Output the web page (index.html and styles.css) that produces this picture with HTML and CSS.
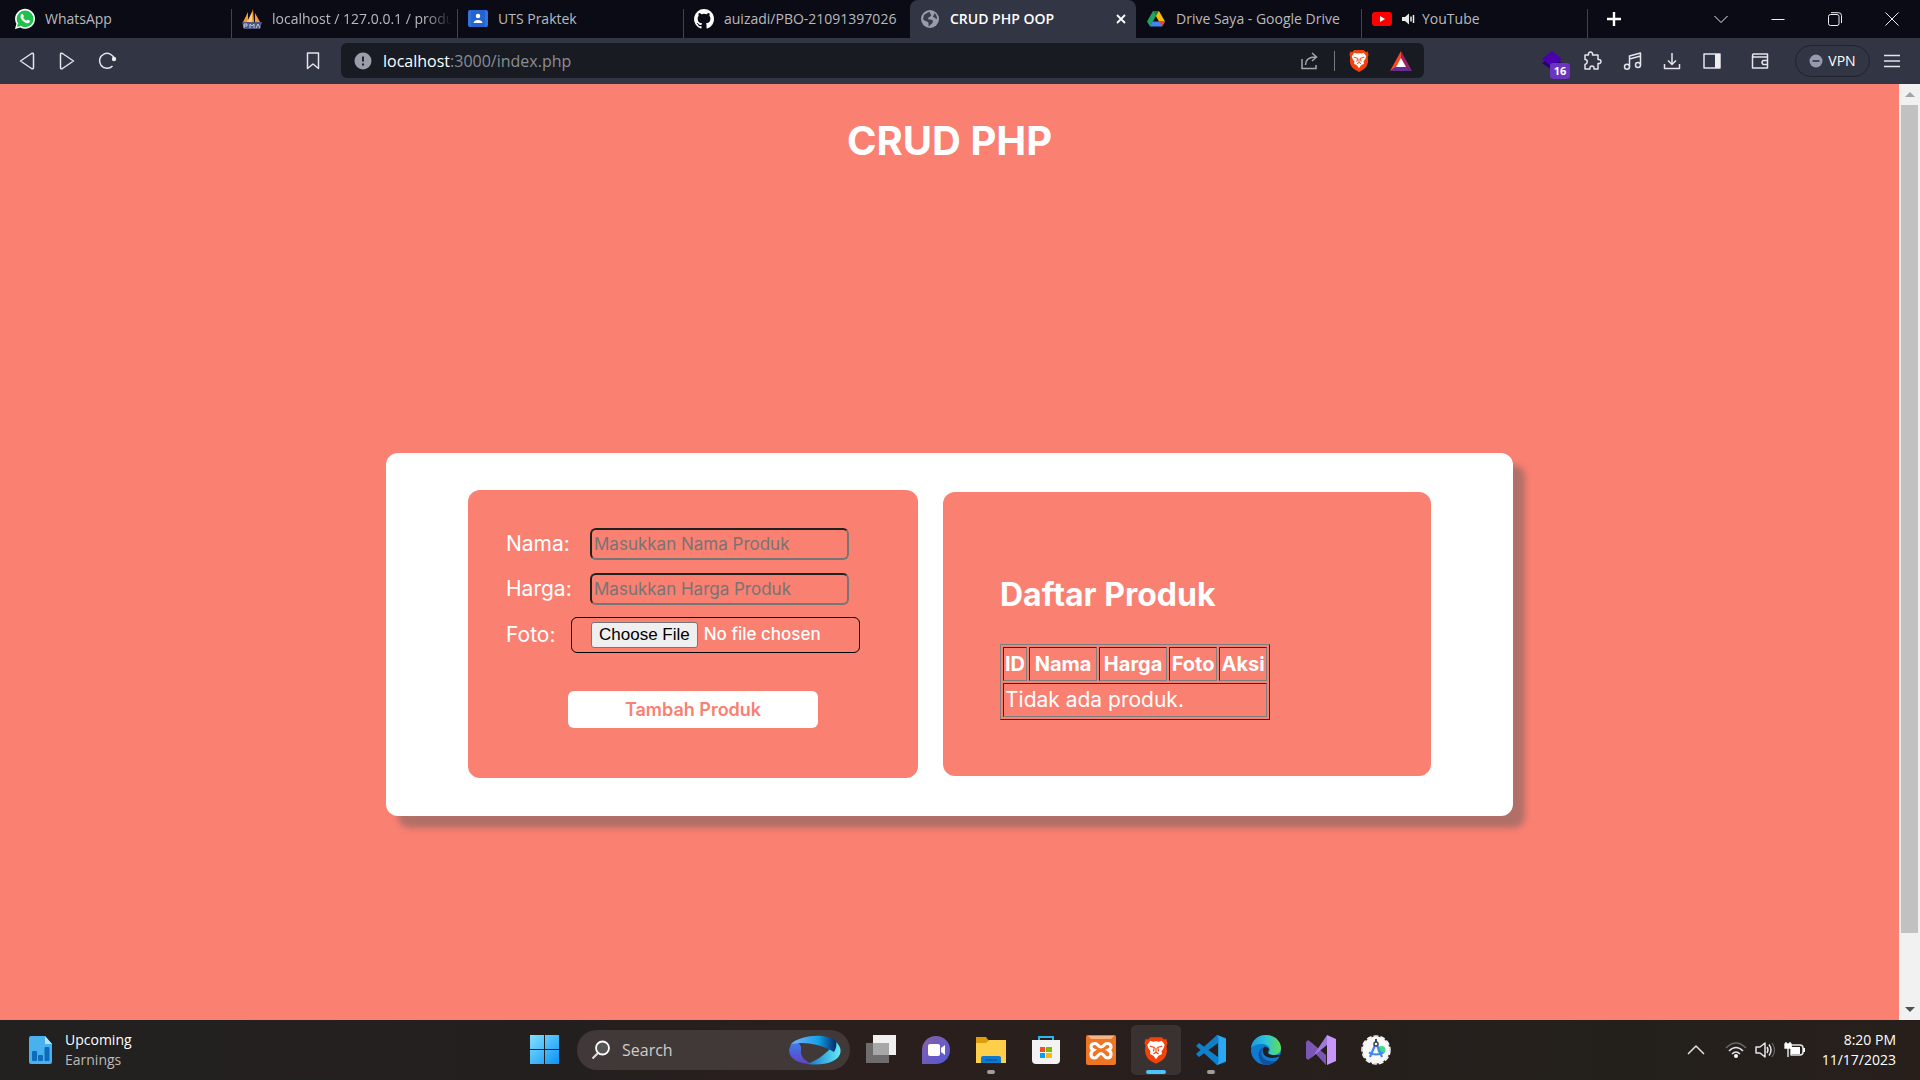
FILE: index.html
```html
<!DOCTYPE html>
<html lang="id">
<head>
<meta charset="utf-8">
<title>CRUD PHP OOP</title>
<meta name="viewport" content="width=device-width, initial-scale=1">
<link rel="stylesheet" href="styles.css">
</head>
<body>
<header class="browser">
  <nav class="tabs" aria-label="Tabs">
    <a class="tab tab-first" href="#">
      <svg class="i20" viewBox="0 0 20 20"><path d="M0 20 1.4 14.8A10 10 0 1 1 5.3 18.6Z" fill="#fff"/><circle cx="10.1" cy="9.9" r="8.4" fill="#1fc04b"/><path d="M2 18l1-4 3 3z" fill="#1fc04b"/><path d="M6.6 5.2c.8-.7 1.3-.3 1.5.2l.7 1.6c.1.5-.6 1.1-.6 1.4.7 1.500 1.900 2.600 3.400 3.200.4 0 .9-1 1.300-.9l1.800.9c.6.400.1 1.700-.6 2.200-1.100.8-3 .3-4.900-.9C7.100 11.500 5.600 9.400 5.500 7.700c0-1 .5-2 1.100-2.500z" fill="#fff"/></svg>
      <span class="tab-title">WhatsApp</span>
    </a>
    <a class="tab" href="#">
      <svg class="i20" viewBox="0 0 20 20"><path d="M1 13 6 3v10zM7 13 11 0l1 13zM13 13V4l5 9z" fill="#f79a2b"/><path d="M5 13 10 3v10z" fill="#ffc98a"/><path d="M0 13h20l-2 7H2z" fill="#4d5680"/><path d="M2 19v-4h3v2H2M8 19v-4l2 2 2-2v4M14 19l2-4 2 4" fill="none" stroke="#c3c7dd" stroke-width="1"/></svg>
      <span class="tab-title fade">localhost / 127.0.0.1 / produk</span>
    </a>
    <a class="tab" href="#">
      <svg class="i20" viewBox="0 0 20 20"><rect y="1" width="20" height="17" rx="2" fill="#2f74e0"/><rect x="3" y="1" width="14" height="17" fill="#2563d0"/><circle cx="10" cy="7" r="2.200" fill="#fff"/><path d="M5.500 14c0-4 9-4 9 0z" fill="#fff"/></svg>
      <span class="tab-title">UTS Praktek</span>
    </a>
    <a class="tab no-line" href="#">
      <svg class="i20" viewBox="0 0 16 16"><path fill="#fff" d="M8 0a8 8 0 0 0-2.530 15.590c.4.070.550-.170.550-.380v-1.490c-2.010.370-2.530-.490-2.690-.940-.090-.230-.480-.940-.820-1.130-.280-.150-.680-.520-.010-.530.630-.010 1.080.580 1.230.820.720 1.210 1.870.870 2.330.660.070-.520.280-.870.510-1.070-1.780-.200-3.640-.890-3.640-3.950 0-.870.310-1.590.820-2.150-.080-.200-.360-1.020.080-2.120 0 0 .670-.210 2.200.820a7.400 7.400 0 0 1 4 0c1.530-1.040 2.200-.820 2.200-.820.440 1.100.160 1.920.080 2.120.510.560.820 1.270.820 2.150 0 3.070-1.870 3.750-3.650 3.950.290.250.540.730.540 1.480v2.200c0 .210.150.460.550.380A8 8 0 0 0 8 0z"/></svg>
      <span class="tab-title">auizadi/PBO-21091397026</span>
    </a>
    <a class="tab active" href="#">
      <svg class="i20" viewBox="0 0 20 20"><circle cx="10" cy="10" r="9" fill="#9a9da8"/><path d="M4 6c2-1 3-3 6-3-1 2 2 2 1 4-1 1-3 1-3 3 2 1 4 0 5 2 0 3-3 3-4 6-1-2 0-4-1-5S4 12 3 10zM14 4c2 1 3 3 3 6-2 0-2-2-4-2 0-2 2-2 1-4z" fill="#3a3d4b"/></svg>
      <span class="tab-title">CRUD PHP OOP</span>
      <svg class="tab-x" viewBox="0 0 10 10"><path d="M1 1l8 8M9 1 1 9" stroke="#fff" stroke-width="1.800"/></svg>
    </a>
    <a class="tab" href="#">
      <svg class="i20" viewBox="0 0 20 20"><path d="M7 2 1 12.500 4 17.500 10 7z" fill="#1fa463"/><path d="M7 2h6l6 10.500h-6z" fill="#fbbc04"/><path d="M6.500 12.500H19l-3 5H4z" fill="#4285f4"/><path d="M13 12.500h6l-3 5z" fill="#ea4335"/><path d="M7 2h6l-3 5z" fill="#188038"/></svg>
      <span class="tab-title">Drive Saya - Google Drive</span>
    </a>
    <a class="tab" href="#">
      <svg class="i20" viewBox="0 0 20 20"><rect y="3" width="20" height="14" rx="3" fill="#f00"/><path d="M8 7v6l5-3z" fill="#fff"/></svg>
      <svg class="audio" viewBox="0 0 14 12"><path d="M0 4h3l4-3.500v11L3 8H0z" fill="#e8e8ea"/><path d="M9 3.500v5M11.500 2v8" stroke="#e8e8ea" stroke-width="1.500"/></svg>
      <span class="tab-title">YouTube</span>
    </a>
    <button class="new-tab" aria-label="New tab"><svg class="i16" viewBox="0 0 16 16"><path d="M8 1v14M1 8h14" stroke="#fff" stroke-width="2.400"/></svg></button>
    <div class="window-buttons">
      <button aria-label="Search tabs"><svg class="i14" viewBox="0 0 14 14"><path d="M.5 4 7 10.500 13.500 4" class="thin"/></svg></button>
      <button aria-label="Minimize"><svg class="i14" viewBox="0 0 14 14"><path d="M.5 7.500h13" class="thin"/></svg></button>
      <button aria-label="Restore"><svg class="i14" viewBox="0 0 14 14"><rect x=".5" y="2.500" width="10.500" height="11" rx="2" class="thin"/><path d="M3 .7h7.500a3 3 0 0 1 3 3V11" class="thin"/></svg></button>
      <button aria-label="Close"><svg class="i14" viewBox="0 0 14 14"><path d="M.5.5l13 13M13.500.5l-13 13" class="thin"/></svg></button>
    </div>
  </nav>
  <div class="toolbar">
    <div class="nav-buttons">
      <button aria-label="Back"><svg class="i20" viewBox="0 0 20 20"><path d="M14.500 2.500 3.500 10l11 7.500q2 1 2-1v-13q0-2-2-1z" class="line"/></svg></button>
      <button aria-label="Forward"><svg class="i20" viewBox="0 0 20 20"><path d="M5.500 2.500 16.500 10l-11 7.500q-2 1-2-1v-13q0-2 2-1z" class="line"/></svg></button>
      <button aria-label="Reload"><svg class="i20" viewBox="0 0 20 20"><path d="M15.500 15A7.500 7.500 0 1 1 17.300 8" class="line"/><circle cx="17" cy="8" r="2.200" fill="#eee"/></svg></button>
      <button class="bookmark" aria-label="Bookmark"><svg class="i20" viewBox="0 0 20 20"><path d="M4.500 2h11v15.500L10 13l-5.500 4.500z" class="line"/></svg></button>
    </div>
    <div class="address">
      <svg class="i20" viewBox="0 0 20 20"><circle cx="10" cy="10" r="8.500" fill="#9b9ea9"/><path d="M10 5.500v5M10 12.500v2" stroke="#20232c" stroke-width="2"/></svg>
      <a class="url" href="#"><b>localhost</b>:3000/index.php</a>
      <svg class="i20 share" viewBox="0 0 20 20"><path d="M2 8v9.500h14V14M5.500 14c0-5 3-8 10-8M12 2l4.500 4-4.500 4" fill="none" stroke="#a5a7ad" stroke-width="1.500"/></svg>
      <span class="divider"></span>
      <svg class="brave" viewBox="0 0 20 24"><use href="#lion"/></svg>
      <svg class="bat" viewBox="0 0 22 20"><path d="M11 0 0 20l11-7z" fill="#ff4724"/><path d="M11 0l11 20-7-5-4-8z" fill="#9e1f63"/><path d="M0 20h22l-7-5H7z" fill="#662d91"/><path d="M11 7l5 9H6z" fill="#fff"/></svg>
    </div>
    <div class="tools">
      <button class="ext" aria-label="Extension"><svg class="i20" viewBox="0 0 20 20"><path d="M10 6l10 6-10 7-10-7z" fill="#250070"/><path d="M10 0l10 8-10 8L0 8z" fill="#4b00ad"/></svg><span class="badge">16</span></button>
      <button aria-label="Extensions"><svg class="i20" viewBox="0 0 20 20"><path d="M3 4h3.500c-1-4 5-4 4 0H16v4.500c4-1 4 5 0 4V18h-4c1-4-5-4-4 0H3v-4.500c3-1 3-5 0-5z" class="line"/></svg></button>
      <button aria-label="Media"><svg class="i20" viewBox="0 0 20 20"><path d="M7.500 15.500V5l11-3v11.500M7.500 8l11-3" class="line"/><circle cx="5" cy="15.800" r="2.500" class="line"/><circle cx="16" cy="14" r="2.500" class="line"/></svg></button>
      <button aria-label="Downloads"><svg class="i20" viewBox="0 0 20 20"><path d="M10 2v11M6 9.500l4 4 4-4M2.500 13v4.500h15V13" class="line"/></svg></button>
      <button aria-label="Side panel"><svg class="i20" viewBox="0 0 20 20"><rect x="2" y="3" width="16" height="14" class="line"/><path d="M13 3h5v14h-5z" fill="#eee"/></svg></button>
      <button class="wallet" aria-label="Wallet"><svg class="i20" viewBox="0 0 20 20"><path d="M17.500 7V3h-14q-2 1 0 3h14v11h-15V5" class="line"/><path d="M18 9.500h-5q-2 2 0 4h5" class="line"/></svg></button>
      <button class="vpn"><svg class="i14" viewBox="0 0 14 14"><circle cx="7" cy="7" r="6.500" fill="#9699b0"/><path d="M3.500 7h7" stroke="#303342" stroke-width="1.600"/></svg>VPN</button>
      <button aria-label="Menu"><svg class="i20" viewBox="0 0 20 20"><path d="M2 4.500h16M2 10h16M2 15.500h16" class="line"/></svg></button>
    </div>
  </div>
</header>

<div class="viewport">
  <main class="page">
    <h1>CRUD PHP</h1>
    <div class="card">
      <form class="panel form">
        <div class="field"><label for="nama">Nama:</label><input type="text" id="nama" placeholder="Masukkan Nama Produk"></div>
        <div class="field"><label for="harga">Harga:</label><input type="text" id="harga" placeholder="Masukkan Harga Produk"></div>
        <div class="field file-field"><label for="foto">Foto:</label><input type="file" id="foto"></div>
        <button type="submit" class="submit">Tambah Produk</button>
      </form>
      <section class="panel list">
        <h2>Daftar Produk</h2>
        <table>
          <thead><tr><th class="c-id">ID</th><th class="c-wide">Nama</th><th class="c-wide">Harga</th><th class="c-mid">Foto</th><th class="c-mid">Aksi</th></tr></thead>
          <tbody><tr><td colspan="5">Tidak ada produk.</td></tr></tbody>
        </table>
      </section>
    </div>
  </main>
  <div class="scrollbar">
    <svg viewBox="0 0 21 21"><path d="M6 13l5-5 5 5z" fill="#a3a3a3"/></svg>
    <div class="thumb"></div>
    <svg viewBox="0 0 21 21"><path d="M6 8l5 5 5-5z" fill="#505050"/></svg>
  </div>
</div>

<footer class="taskbar">
  <a class="widget" href="#">
    <svg viewBox="0 0 23 28"><path d="M2 0h14l7 8v18q0 2-2 2H2q-2 0-2-2V2q0-2 2-2z" fill="#48b1ee"/><path d="M16 0l7 8h-7z" fill="#b4e3fb"/><rect x="3" y="15" width="5" height="10" rx="1" fill="#0f6cbd"/><rect x="9" y="19" width="5" height="6" rx="1" fill="#0f6cbd"/><rect x="15.500" y="11" width="5" height="14" rx="1" fill="#0f6cbd"/></svg>
    <span>Upcoming<small>Earnings</small></span>
  </a>
  <div class="apps">
    <button class="start" aria-label="Start"><svg class="i30" viewBox="0 0 30 30"><defs><linearGradient id="win" x2="1" y2="1"><stop stop-color="#84e0ff"/><stop offset="1" stop-color="#0a93f7"/></linearGradient></defs><path d="M0 0h14v14H0zM15 0h14v14H15zM0 15h14v14H0zM15 15h14v14H15z" fill="url(#win)"/></svg></button>
    <button class="search">
      <svg class="i20" viewBox="0 0 20 20"><circle cx="11.500" cy="8" r="6.500" fill="#555" stroke="#fff" stroke-width="1.800"/><path d="M7 13l-5.500 5.500" stroke="#ddd" stroke-width="2.200"/></svg>
      <span>Search</span>
      <svg class="bing" viewBox="0 0 52 29"><defs><linearGradient id="b1"><stop stop-color="#7eb5f8"/><stop offset=".6" stop-color="#14a0e6"/><stop offset="1" stop-color="#032a6b"/></linearGradient><linearGradient id="b2" y2="1" x2="0"><stop stop-color="#3f7de8"/><stop offset="1" stop-color="#6340c8"/></linearGradient><linearGradient id="b3"><stop stop-color="#1470c8"/><stop offset="1" stop-color="#62ecf8"/></linearGradient></defs><path d="M2 8C8 4 13 8 12 14c-1 7 4 10 10 14C10 28 0 23 0 14z" fill="url(#b2)"/><path d="M18 28c8-3 18-8 29-22 7 6 6 15-3 19-8 4-17 4-26 3z" fill="url(#b3)"/><path d="M2 8C10 0 36-4 47 5c1 4 0 8-2 11C33 9 18 5 2 8z" fill="url(#b1)"/></svg>
    </button>
    <button class="app" aria-label="Task view"><svg class="i30" viewBox="0 0 30 30"><path d="M0 8h23v20H0z" fill="#6d6d6d"/><path d="M7 0h23v20H7z" fill="#f0f0f0"/><path d="M7 8h16v12H7z" fill="#a7a7a7"/></svg></button>
    <button class="app" aria-label="Chat"><svg class="i30" viewBox="0 0 30 30"><defs><linearGradient id="ch" x2="1" y2="1"><stop stop-color="#8660a9"/><stop offset="1" stop-color="#5059d8"/></linearGradient></defs><path d="M1 29V15A14 14 0 1 1 15 29z" fill="url(#ch)"/><rect x="7" y="9" width="12" height="12" rx="2" fill="#fff"/><path d="M20 13l4-3v10l-4-3z" fill="#fff"/></svg></button>
    <button class="app" aria-label="File Explorer"><svg class="i30" viewBox="0 0 30 30"><path d="M0 2h10l3 4v5H0z" fill="#dc9c0c"/><path d="M0 8h10l3-3h17v23H0z" fill="#fdcf4b"/><path d="M5 28v-5q0-2 2-2h16q2 0 2 2v5z" fill="#0f79cf"/><path d="M9 25h12" stroke="#0a4d94"/></svg><i class="dot"></i></button>
    <button class="app" aria-label="Store"><svg class="i30" viewBox="0 0 30 30"><path d="M8 8V2h14v6" fill="none" stroke="#2cb5f0" stroke-width="2"/><path d="M1 5h28v20q0 4-4 4H5q-4 0-4-4z" fill="#f3f3f3"/><path d="M8 5V2h14v3" fill="none" stroke="#2cb5f0" stroke-width="2"/><path d="M9 12h5v5H9z" fill="#f25022"/><path d="M15 12h6v5h-6z" fill="#7fba00"/><path d="M9 18h5v5H9z" fill="#00a4ef"/><path d="M15 18h6v5h-6z" fill="#ffb900"/></svg></button>
    <button class="app" aria-label="XAMPP"><svg class="i30" viewBox="0 0 30 30"><rect width="30" height="30" rx="2" fill="#ee7524"/><path d="M2 1h26l-3 3H5z" fill="#f9b483"/><path d="M9 8.500c-5 0-5 5-1.500 6.500C4 17 4 23 8.500 23c3.500 0 3.500-4.500 6.500-4.500s3 4.500 6.500 4.500c4.500 0 4.500-6 1-8 3.500-1.500 3.500-6.500-1.500-6.500-3 0-3 3.500-6 3.500s-3-3.500-6-3.500z" fill="none" stroke="#fff" stroke-width="3.200"/></svg></button>
    <button class="app current" aria-label="Brave"><svg class="i30" viewBox="-2 -1 24 26"><g id="lion"><path d="M5 1h10l2 2 2-.5L20 6l-.8 2 .3 5c-.5 4-2 6.500-5 8.500L10 24l-4.500-2.500C2.500 19.500 1 17 .5 13l.3-5L0 6l1-3.500L3 3z" fill="#f4430a"/><path d="M5 4l2.500.8L10 4.400l2.500.4L15 4l2.500 3.500-.7 2.500-2 3 .4 2.500-3 1.500L10 20l-2.200-3-3-1.500.4-2.500-2-3-.7-2.500z" fill="#fff"/><path d="M4.500 8.500l4 1.200-.7 3.500M15.500 8.500l-4 1.200.7 3.500M7.800 15.500l2.200-1.500 2.200 1.500M10 10v4" fill="none" stroke="#f4430a" stroke-width="1"/></g></svg><i class="dot wide"></i></button>
    <button class="app" aria-label="Visual Studio Code"><svg class="i30" viewBox="0 0 30 30"><path d="M21 0l9 3v24l-9 3L0 11l3-3 19 14V8L3 22l-3-3z" fill="#0f7fc9"/><path d="M21 0l9 4v22l-9 4 1.500-3V3z" fill="#2ba7f3"/></svg><i class="dot"></i></button>
    <button class="app" aria-label="Edge"><svg class="i30" viewBox="0 0 30 30"><defs><linearGradient id="e1"><stop stop-color="#1a9ae0"/><stop offset=".5" stop-color="#2bc4d8"/><stop offset="1" stop-color="#62de54"/></linearGradient></defs><circle cx="15" cy="15" r="15" fill="#0f7bd0"/><path d="M0 13C1 4 8 0 15 0c9 0 15 6 15 13 0 5-4 7-8 7-3 0-5-1-4-3 3-5-3-8-7-8-5 0-9 2-11 4z" fill="url(#e1)"/><path d="M12 13c-5 7 1 15 13 13-4 4-9 4-12 4C5 24 7 14 12 13z" fill="#124f9c"/><path d="M13 12c-4 5 1 14 14 10 1-1 2 0 1 1l2-3-7 0c-5 0-8-2-5-5 0-2-3-4-5-3z" fill="#241f1e"/></svg></button>
    <button class="app" aria-label="Visual Studio"><svg class="i30" viewBox="0 0 30 30"><path d="M2 5 0 7v16l2 2 7-7 11 12V20L6 8z" fill="#7b56b5"/><path d="M2 25l7-7 12-18v10L6 22z" fill="#a179dc"/><path d="M21 0l9 4v22l-9 4z" fill="#c896fa"/></svg></button>
    <button class="app" aria-label="Android Studio"><svg class="i30" viewBox="0 0 30 30"><circle cx="15" cy="15" r="13.500" fill="#f8f8f8"/><circle cx="15" cy="15" r="14" fill="none" stroke="#f8f8f8" stroke-width="1.500" stroke-dasharray="5 2"/><circle cx="20.500" cy="15" r="4" fill="#3ddc84"/><path d="M14.500 9 9 22M15.500 9l5.500 13M8 17.500q7 4 14 0" fill="none" stroke="#4285f4" stroke-width="2.200"/><path d="M15 4v4" stroke="#37474f" stroke-width="2"/><circle cx="15" cy="9" r="2" fill="#fff" stroke="#37474f" stroke-width="1.500"/></svg></button>
  </div>
  <div class="tray">
    <svg class="i20" viewBox="0 0 20 20"><path d="M2 14l8-8 8 8" class="line"/></svg>
    <svg class="i20 wifi" viewBox="0 0 20 20"><path d="M0 8q10-10 20 0" fill="none" stroke="#666" stroke-width="1.500"/><path d="M3 11q7-7 14 0M6 14q4-4 8 0" class="line"/><circle cx="10" cy="16" r="2" fill="#fff"/></svg>
    <svg class="i20" viewBox="0 0 20 20"><path d="M1 7h4l5-4v14l-5-4H1zM12 7q2 3 0 6M14 4.500q4 5.500 0 11" class="line"/><path d="M17 3q5 7 0 14" fill="none" stroke="#777"/></svg>
    <svg class="i20 battery" viewBox="0 0 20 20"><path d="M6 5h9q3 0 3 3v4q0 3-3 3H6z" class="line"/><path d="M6 7h9v7H6z" fill="#fff"/><path d="M18 8h2v4h-2z" fill="#fff"/><path d="M1 2v3M5 2v3M0 4h6v4H0zM3 8v9" stroke="#fff" fill="#fff" stroke-width="1.300"/></svg>
    <time datetime="2023-11-17T20:20">8:20 PM<br>11/17/2023</time>
  </div>
</footer>
</body>
</html>
```
FILE: styles.css
```css
* { box-sizing: border-box; }

body {
  margin: 0;
  min-height: 100vh;
  display: flex;
  flex-direction: column;
  font-family: "Open Sans", "Noto Sans", sans-serif;
  font-size: 14px;
  color: #fff;
}

button {
  font: inherit;
  color: inherit;
  background: none;
  border: 0;
  padding: 0;
}

a { color: inherit; text-decoration: none; }
svg { display: block; flex: none; overflow: visible; }

.i14 { width: 14px; height: 14px; }
.i16 { width: 16px; height: 16px; }
.i20 { width: 20px; height: 20px; }
.i30 { width: 30px; height: 30px; }
.thin { fill: none; stroke: #eee; stroke-width: 1; }
.line { fill: none; stroke: #e4e4ea; stroke-width: 1.5; stroke-linejoin: round; }

/* Browser chrome */
.tabs {
  display: flex;
  height: 38px;
  background: #0b0b15;
}

.tab {
  display: flex;
  align-items: center;
  gap: 10px;
  flex: 0 1 226px;
  min-width: 0;
  padding: 0 6px 1px 10px;
  color: #b9b9be;
  background: linear-gradient(#42434b, #42434b) right bottom / 1px 29px no-repeat;
}

.tab-first { flex-basis: 232px; padding-left: 15px; }
.tab.no-line { background: none; }
.tab.active {
  background: #323544;
  border-radius: 8px 8px 0 0;
  color: #fff;
  font-weight: 600;
}

.tab-title { flex: 1; overflow: hidden; white-space: nowrap; }
.fade { mask-image: linear-gradient(to right, #000 85%, transparent); }
.tab-x { width: 10px; height: 10px; margin-right: 4px; }
.audio { width: 14px; height: 12px; margin-right: -4px; }

.new-tab, .window-buttons button {
  display: flex;
  align-items: center;
  justify-content: center;
  width: 57px;
}
.new-tab { width: 52px; }

.window-buttons { display: flex; margin-left: auto; }

.toolbar {
  display: grid;
  grid-template-columns: 341px 1fr 496px;
  align-items: center;
  height: 46px;
  padding-bottom: 1px;
  background: #323544;
}

.nav-buttons { display: flex; padding: 0 8px 0 7px; }
.nav-buttons button, .tools button {
  display: flex;
  align-items: center;
  justify-content: center;
  width: 40px;
  height: 32px;
}
.nav-buttons .bookmark { margin-left: auto; }

.address {
  display: flex;
  align-items: center;
  height: 35px;
  padding: 0 12px;
  background: #181b22;
  border-radius: 6px;
}

.url { margin-left: 10px; flex: 1; font-size: 16px; color: #8b8e96; }
.url b { font-weight: 400; color: #fff; }
.divider { width: 1px; height: 20px; margin: 0 14px; background: #77797f; }
.brave { width: 20px; height: 23px; }
.bat { width: 22px; height: 20px; margin-left: 21px; }

.tools {
  display: flex;
  justify-content: flex-end;
  align-items: center;
  padding-right: 8px;
}
.ext { position: relative; }
.badge {
  position: absolute;
  left: 18px;
  top: 18px;
  width: 20px;
  height: 16px;
  border-radius: 3px;
  background: #6b35be;
  font-size: 11px;
  font-weight: 700;
  line-height: 16px;
}
.tools .wallet { margin-left: 8px; }
.tools .vpn {
  width: 75px;
  gap: 5px;
  margin: 0 2px 0 15px;
  border: 1px solid #20222e;
  border-radius: 16px;
}

/* Page */
.viewport { flex: 1; display: flex; background: #fa8072; }

.page {
  flex: 1;
  font-family: Inter, sans-serif;
  font-size: 21px;
}

h1 {
  margin: 27px 0 282px;
  font-size: 40px;
  line-height: 60px;
  text-align: center;
}

.card {
  display: flex;
  align-items: center;
  justify-content: center;
  gap: 25px;
  width: 60%;
  max-width: 1127px;
  margin: 0 auto 84px;
  padding: 37px 0 38px;
  background: #fff;
  border-radius: 12px;
  box-shadow: 12px 12px 6px rgba(92, 92, 92, 0.45);
}

.panel { background: #fa8072; border-radius: 12px; }
.form { width: 450px; padding: 38px 38px 50px; }
.field { display: flex; align-items: center; margin-bottom: 13px; }
.field label { width: 84px; line-height: 30px; }
.field input {
  width: 259px;
  height: 32px;
  padding: 1px 2px;
  border: 2px inset #767676;
  border-radius: 6px;
  background: none;
  color: #fff;
  font-family: inherit;
  font-size: 17px;
}
.field input::placeholder { color: #757575; }
.field:nth-child(2) { margin-bottom: 12px; }

.field.file-field { margin-bottom: 38px; }
.field.file-field label { width: 65px; }
.file-field input {
  width: 289px;
  height: 36px;
  padding: 4px 0 4px 19px;
  border: 1px solid #000;
  font-weight: 500;
}
.file-field input::file-selector-button {
  height: 26px;
  margin-right: 6px;
  padding: 0 7px;
  border: 1px solid #767676;
  border-radius: 3px;
  background: #efefef;
  color: #000;
  font: 17px "Liberation Sans", sans-serif;
}

.submit {
  display: block;
  width: 250px;
  height: 37px;
  margin: 0 auto;
  border-radius: 6px;
  background: #fff;
  color: #fa8072;
  font-size: 18px;
  font-weight: 600;
}

.list { width: 488px; padding: 80px 57px 56px; }
h2 { margin: 0 0 27px; font-size: 32px; line-height: 45px; }

table {
  border: 1px outset #808080;
  border-spacing: 2px;
}
th, td {
  height: 34px;
  padding: 1px;
  border: 1px inset #808080;
  line-height: 30px;
  white-space: nowrap;
}
th { font-size: 20px; }
.c-id { min-width: 24px; }
.c-wide { min-width: 68px; }
.c-mid { min-width: 48px; }

.scrollbar {
  display: flex;
  flex-direction: column;
  width: 21px;
  background: #f1f1f1;
}
.scrollbar svg { width: 21px; height: 21px; }
.thumb { flex: 1; margin: 0 2px 66px; background: #c1c1c1; }

/* Taskbar */
.taskbar {
  display: grid;
  grid-template-columns: 520px 1fr auto;
  align-items: center;
  height: 60px;
  background: linear-gradient(to right, #222120, #241f1f 30%, #2b1f1d 45%, #271f1d 65%, #23201b 85%, #281f1b);
}

.widget { display: flex; gap: 13px; padding-left: 29px; line-height: 20px; }
.widget > svg { width: 23px; height: 28px; margin-top: 6px; }
.widget small { display: block; font-size: 14px; color: #bdbab9; }

.apps { display: flex; align-items: center; }
.start { width: 50px; height: 50px; padding: 0 10px; }
.search {
  display: flex;
  align-items: center;
  gap: 11px;
  width: 273px;
  height: 40px;
  margin: 0 6px 0 7px;
  padding: 0 9px 0 14px;
  border-radius: 20px;
  background: #403938;
  font-size: 16px;
  color: #cfcccb;
}
.search span { flex: 1; text-align: left; }
.bing { width: 52px; height: 29px; }

.app {
  position: relative;
  width: 50px;
  height: 50px;
  margin-right: 5px;
  padding: 0 10px;
  border-radius: 5px;
}
.current { background: #393230; }
.dot {
  position: absolute;
  left: 21px;
  bottom: 1px;
  width: 8px;
  height: 4px;
  border-radius: 2px;
  background: #a09d9b;
}
.dot.wide { left: 15px; width: 20px; background: #4cc2ff; }

.tray { display: flex; align-items: center; padding-right: 24px; }
.wifi { margin: 0 9px 0 20px; }
.battery { margin-left: 10px; }
.tray time {
  width: 91px;
  line-height: 20px;
  text-align: right;
  white-space: nowrap;
}
```
